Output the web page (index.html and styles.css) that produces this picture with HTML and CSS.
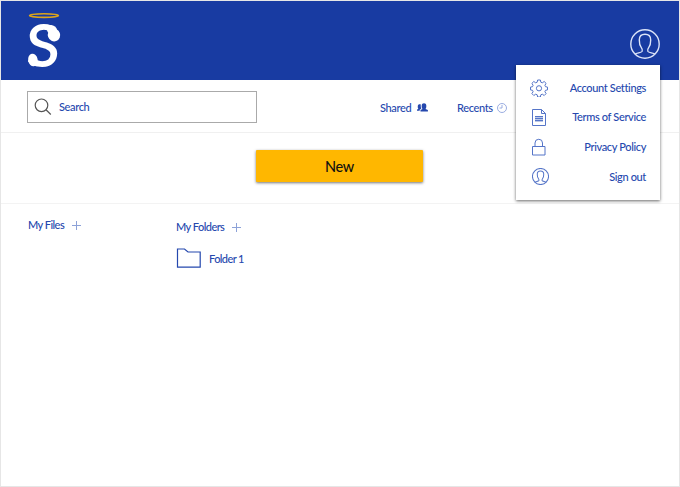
FILE: index.html
```html
<!DOCTYPE html>
<html lang="en">
<head>
<meta charset="utf-8">
<title>My Files</title>
<link rel="stylesheet" href="styles.css">
</head>
<body>
<svg class="defs" width="0" height="0" aria-hidden="true">
  <symbol id="person" viewBox="0 0 30 30">
    <circle cx="15" cy="15" r="14.2"/>
    <path d="M5 25.3C6.500 23.600 11.300 24 12.200 22.200c.6-1.400-.2-2.700-1-3.800C9.700 16.500 9.300 14 9.300 11 9.300 7.200 10.800 5.300 15 5.300s5.700 1.900 5.700 5.700c0 3-.4 5.500-1.900 7.400-.8 1.100-1.600 2.400-1 3.800.9 1.800 5.700 1.400 7.200 3.100"/>
  </symbol>
</svg>
<div class="app">
  <header class="header">
    <svg class="logo" width="38" height="70" viewBox="0 0 38 70">
      <ellipse class="halo" cx="18" cy="5.600" rx="14.400" ry="1.800"/>
      <text class="logo-letter" transform="translate(17 56.600) scale(1.020 1)" text-anchor="middle">S</text>
      <ellipse class="bulb" cx="28" cy="25" rx="6.200" ry="6.500" transform="rotate(-20 28 25)"/>
      <ellipse class="bulb" cx="26" cy="20" rx="5.500" ry="4.500" transform="rotate(40 26 20)"/>
      <ellipse class="bulb" cx="6.900" cy="50" rx="4.800" ry="6.300" transform="rotate(-10 6.900 50)"/>
    </svg>
    <div class="account">
      <svg class="avatar" width="30" height="30"><use href="#person"/></svg>
      <nav class="menu">
        <a class="item"><svg class="icon" width="18" height="18" viewBox="0 0 18 18"><path d="M7.600 1h2.800l.4 2.200 1.500.6 1.900-1.300 1.900 1.900-1.200 1.900.6 1.400 2 .4v2.800l-2 .4-.6 1.400 1.200 1.900-1.900 1.900-1.900-1.300-1.500.6-.4 2.200H7.600l-.4-2.200-1.500-.6-1.900 1.300-1.900-1.900 1.200-1.900-.6-1.400-2-.4V8.100l2-.4.6-1.400-1.200-1.900 1.900-1.900 1.900 1.300 1.500-.6z"/><circle cx="9" cy="9.300" r="2.600"/></svg><span>Account Settings</span></a>
        <a class="item"><svg class="icon" width="18" height="18" viewBox="0 0 18 18"><path d="M2.500 1.500h9l4 4v12h-13zM11.500 1.500v4h4"/><path d="M5 8.500h8M5 10.500h8M5 12.500h8"/><path class="shade" d="M5 8h8v6H5z"/></svg><span>Terms of Service</span></a>
        <a class="item"><svg class="icon" width="18" height="18" viewBox="0 0 18 18"><path d="M2.500 8.500h12.500v8.500H2.500zM5 8.500V5a3.750 3.750 0 0 1 7.500 0v3.500"/></svg><span>Privacy Policy</span></a>
        <a class="item"><svg class="icon person" width="17" height="17" viewBox="0 0 30 30"><use href="#person"/></svg><span>Sign out</span></a>
      </nav>
    </div>
  </header>
  <section class="toolbar">
    <label class="search"><svg width="18" height="18" viewBox="0 0 18 18"><circle cx="7.500" cy="7.300" r="6.300"/><path d="M12 11.800l4.800 4.700"/></svg><span>Search</span></label>
    <a class="link shared"><span>Shared</span><svg width="11" height="9" viewBox="0 0 11 9"><path d="M3.500 8.500V7l2-1C4.700 5 4.600 3.800 4.700 2.400 4.800.9 5.600.2 7 .2s2.200.7 2.300 2.200C9.400 3.800 9.200 5 8.500 6l2.400 1v1.500z"/><path d="M0 7.800V6.600l1.400-.7C.7 5 .7 4 .8 3 .9 1.800 2 1 3.800 1.500c-.2 1.700 0 3 .5 4L2.700 6.700v1.100z"/></svg></a>
    <a class="link recents"><span>Recents</span><svg width="10" height="10" viewBox="0 0 10 10"><circle cx="5" cy="5" r="4.500"/><path d="M5 2v3H2.500"/></svg></a>
  </section>
  <section class="actions"><button class="new" type="button">New</button></section>
  <main class="content">
    <section class="files"><h2>My Files<i class="plus"></i></h2></section>
    <section class="folders">
      <h2>My Folders<i class="plus"></i></h2>
      <a class="folder"><svg width="26" height="21" viewBox="0 0 26 21"><path d="M1.500 1h7l3.500 3h12.200v15.200H1.500z"/></svg><span>Folder 1</span></a>
    </section>
  </main>
</div>
</body>
</html>
```

FILE: styles.css
```css
* { box-sizing: border-box; }
body {
  margin: 0;
  background: #fff;
  color: #2548ae;
  font: 500 11px/16px Lato, "Open Sans", sans-serif;
  letter-spacing: -.36px;
}
svg { display: block; flex: none; fill: none; stroke: currentColor; }
.defs { position: absolute; }
.app { height: 487px; border: 1px solid #e6e6e6; }
.header {
  height: 79px;
  background: #183ba2;
  padding: 9px 19px 0 25px;
  display: flex;
  justify-content: space-between;
}
.logo { overflow: visible; }
.halo { stroke: #dca51c; stroke-width: 1.600; }
.logo-letter {
  font: 600 60px Lato, sans-serif;
  letter-spacing: 0;
  fill: #fff;
  stroke: none;
}
.bulb { fill: #fff; stroke: none; }
.account { position: relative; padding-top: 19px; }
.avatar { color: #dbe3f8; stroke-width: 1.400; }
.menu {
  position: absolute;
  z-index: 1;
  right: 0;
  top: 55px;
  width: 144px;
  height: 135px;
  padding: 8px 14px 0 14px;
  background: #fff;
  box-shadow: 0 1px 3px rgba(0, 0, 0, .6);
}
.item {
  height: 29.600px;
  display: flex;
  align-items: center;
  justify-content: space-between;
  white-space: nowrap;
}
.icon { stroke: #5575c8; stroke-width: 1; }
.shade { fill: #5575c8; fill-opacity: .4; stroke: none; }
.person { stroke-width: 1.800; margin-left: 2px; }
.toolbar {
  height: 53px;
  padding: 1px 0 0 26px;
  border-bottom: 1px solid #f0f0f0;
  display: flex;
  align-items: center;
}
.search {
  width: 230px;
  height: 32px;
  margin-top: 1px;
  border: 1px solid #aaa;
  display: flex;
  align-items: center;
  gap: 7px;
  padding-left: 6px;
}
.search svg { color: #555; stroke-width: 1.200; }
.link { display: flex; align-items: center; padding-top: 2px; }
.shared { margin-left: 123px; width: 77px; gap: 6px; }
.shared svg { fill: currentColor; stroke: none; }
.recents { gap: 4px; }
.recents svg { stroke: #8fa4dc; stroke-width: .9; }
.actions { height: 71px; border-bottom: 1px solid #f3f3f3; padding: 17px 0 0 255px; }
.new {
  display: block;
  width: 167px;
  height: 32px;
  padding: 0;
  border: 0;
  border-radius: 1px;
  background: #ffb700;
  color: #111;
  box-shadow: 0 1px 3px rgba(0, 0, 0, .55);
  font: 500 14.500px/33px Lato, sans-serif;
  letter-spacing: -.3px;
}
.content { display: flex; padding: 13px 0 0 27px; }
.files { width: 148px; }
.folders { padding-top: 2px; }
h2 { margin: 0; font: inherit; letter-spacing: -.54px; display: flex; align-items: center; }
.plus {
  width: 9px;
  height: 9px;
  margin-left: 8px;
  background:
    linear-gradient(#8da2d8, #8da2d8) 4px 0 / 1px 9px no-repeat,
    linear-gradient(#8da2d8, #8da2d8) 0 4px / 9px 1px no-repeat;
}
.folder { display: flex; align-items: center; gap: 7px; margin-top: 13px; letter-spacing: -.6px; }
.folder svg { stroke-width: 1.200; }
```
